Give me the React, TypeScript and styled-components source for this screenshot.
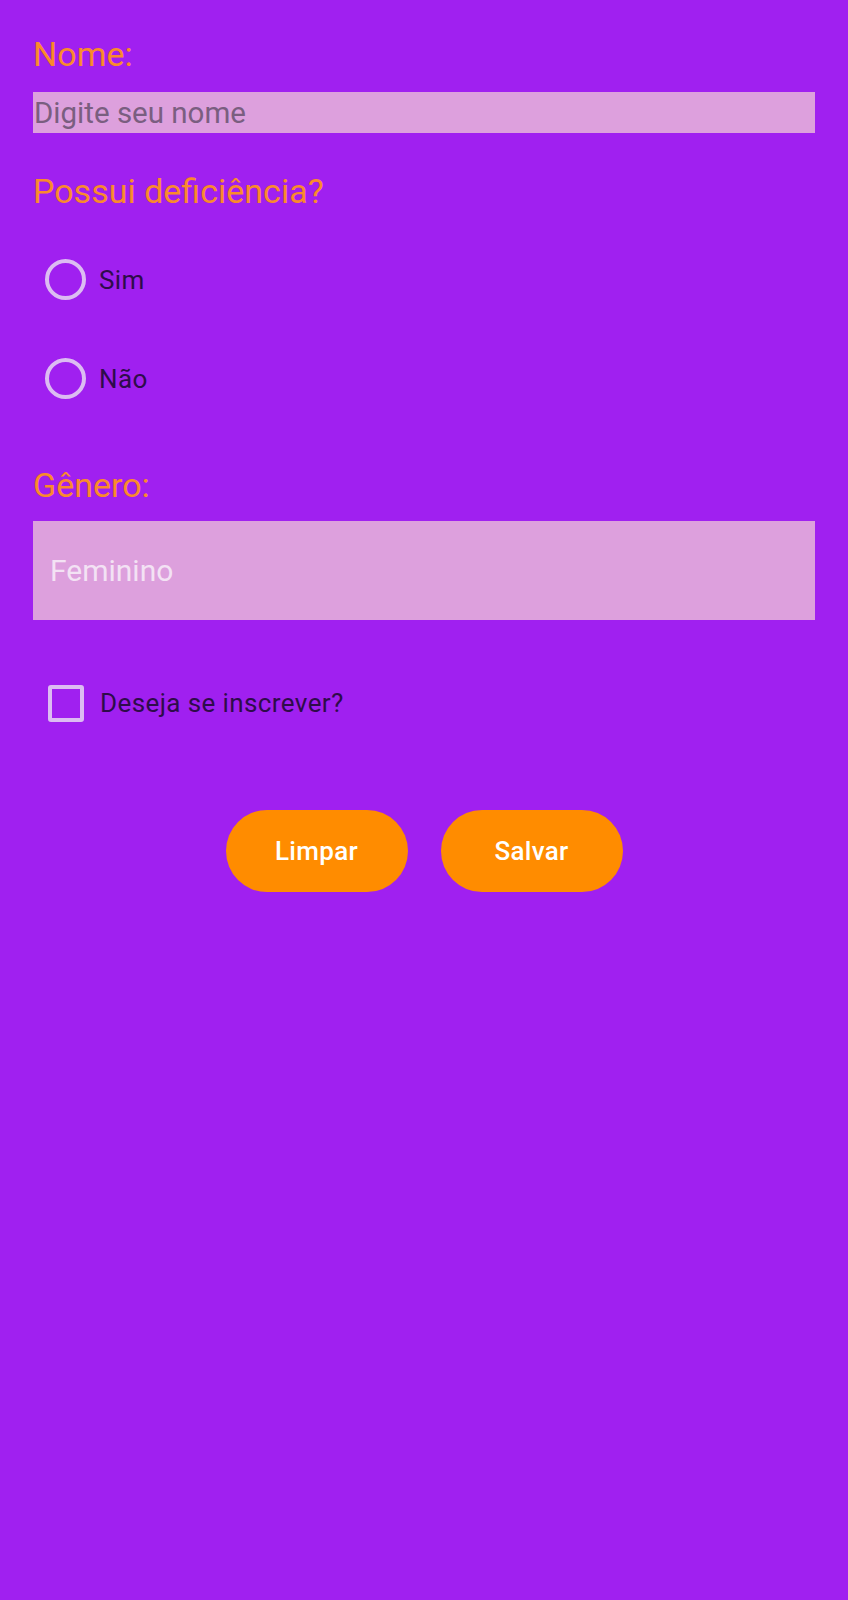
import React, { useState } from "react";
import styled, { createGlobalStyle } from "styled-components";

const GlobalStyle = createGlobalStyle`
    html, body {
        margin: 0;
        padding: 0;
        background-color: #a020f0;
        font-family: Roboto, "Noto Sans", sans-serif;
    }
    body {
        min-height: 1600px;
    }
`;

const Form = styled.div`
    display: flex;
    flex-direction: column;
    padding: 34px 33px 0 33px;
`;

const Label = styled.div<{ $gap?: number }>`
    color: #fa8a2c;
    font-size: 34px;
    line-height: normal;
    margin-top: ${(p) => p.$gap ?? 0}px;
`;

const TextInput = styled.input`
    margin-top: 18px;
    height: 41px;
    box-sizing: border-box;
    width: 100%;
    border: none;
    outline: none;
    padding: 0 0 0 1px;
    background-color: #dda0dd;
    font-family: Roboto, sans-serif;
    font-size: 29.5px;
    color: #333;

    &::placeholder {
        color: #7a5e80;
    }
`;

const RadioGroup = styled.div`
    display: flex;
    flex-direction: column;
    margin-top: 19px;
`;

const OptionRow = styled.label<{ $height: number }>`
    display: flex;
    align-items: center;
    height: ${(p) => p.$height}px;
    cursor: pointer;
`;

const RadioCircle = styled.span<{ $checked: boolean }>`
    width: 41px;
    height: 41px;
    box-sizing: border-box;
    border-radius: 50%;
    border: 4px solid #dcbcf2;
    margin-left: 12px;
    margin-right: 13px;
    display: flex;
    align-items: center;
    justify-content: center;

    &::after {
        content: "";
        width: 19px;
        height: 19px;
        border-radius: 50%;
        background-color: #dcbcf2;
        display: ${(p) => (p.$checked ? "block" : "none")};
    }
`;

const CheckBox = styled.span<{ $checked: boolean }>`
    width: 36px;
    height: 37px;
    box-sizing: border-box;
    border: 4px solid #dcbcf2;
    border-radius: 3px;
    margin-left: 15px;
    margin-right: 16px;
    background-color: ${(p) => (p.$checked ? "#dcbcf2" : "transparent")};
`;

const OptionText = styled.span`
    color: #2e0c4a;
    font-size: 26px;
    letter-spacing: 0.4px;
`;

const Spinner = styled.div`
    margin-top: 16px;
    height: 99px;
    background-color: #dda0dd;
    display: flex;
    align-items: center;
    padding-left: 17px;
    color: #f3e2f4;
    font-size: 30px;
`;

const CheckRow = styled.div`
    margin-top: 51px;
`;

const ButtonRow = styled.div`
    display: flex;
    justify-content: center;
    gap: 33px;
    margin-top: 75px;
`;

const ActionButton = styled.button`
    width: 182px;
    height: 82px;
    border: none;
    border-radius: 41px;
    background-color: #ff8c00;
    color: #fff;
    font-family: Roboto, sans-serif;
    font-weight: 500;
    font-size: 26px;
    letter-spacing: 0.3px;
    cursor: pointer;
`;

function App() {
    const [nome, setNome] = useState("");
    const [deficiencia, setDeficiencia] = useState<string | null>(null);
    const [inscrever, setInscrever] = useState(false);

    const limpar = () => {
        setNome("");
        setDeficiencia(null);
        setInscrever(false);
    };

    return (
        <>
            <GlobalStyle />
            <Form>
                <Label>Nome:</Label>
                <TextInput
                    placeholder="Digite seu nome"
                    value={nome}
                    onChange={(e) => setNome(e.target.value)}
                />

                <Label $gap={38}>Possui deficiência?</Label>
                <RadioGroup>
                    {["Sim", "Não"].map((opcao) => (
                        <OptionRow
                            key={opcao}
                            $height={99}
                            onClick={() => setDeficiencia(opcao)}
                        >
                            <RadioCircle $checked={deficiencia === opcao} />
                            <OptionText>{opcao}</OptionText>
                        </OptionRow>
                    ))}
                </RadioGroup>

                <Label $gap={37}>Gênero:</Label>
                <Spinner>Feminino</Spinner>

                <CheckRow>
                    <OptionRow
                        $height={64}
                        onClick={() => setInscrever(!inscrever)}
                    >
                        <CheckBox $checked={inscrever} />
                        <OptionText>Deseja se inscrever?</OptionText>
                    </OptionRow>
                </CheckRow>

                <ButtonRow>
                    <ActionButton onClick={limpar}>Limpar</ActionButton>
                    <ActionButton>Salvar</ActionButton>
                </ButtonRow>
            </Form>
        </>
    );
}

export default App;
